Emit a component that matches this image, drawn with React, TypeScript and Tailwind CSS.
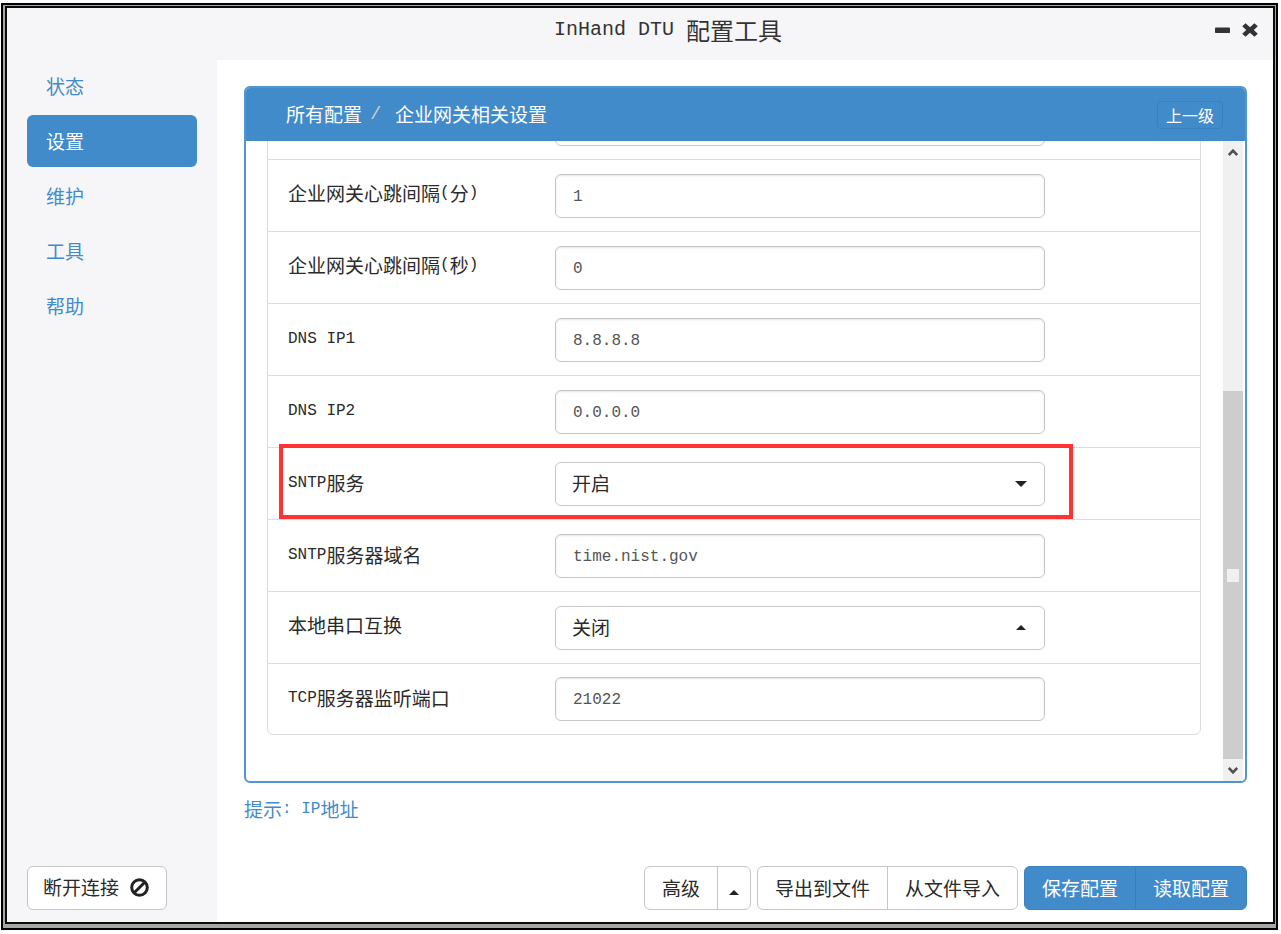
import type { ReactNode } from "react";

/** Splits mixed text so Latin runs are set in a smaller monospace than the Chinese around them. */
function Mixed({ text, large }: { text: string; large?: boolean }) {
  const parts = text.match(/[\x20-\x7e]+|[^\x20-\x7e]+/g) ?? [];
  return (
    <span className="inline-flex items-center whitespace-pre">
      {parts.map((part, i) => (
        <span
          key={i}
          className={
            /^[\x20-\x7e]/.test(part)
              ? large
                ? "font-['Liberation_Mono',monospace] text-[20px]"
                : "font-['Liberation_Mono',monospace] text-[16px]"
              : undefined
          }
        >
          {part}
        </span>
      ))}
    </span>
  );
}

const navItems = ["状态", "设置", "维护", "工具", "帮助"];

type Field = {
  id: string;
  label: string;
  value: string;
  options?: string[];
  open?: boolean;
  marked?: boolean;
};

const fields: Field[] = [
  { id: "heartbeat-min", label: "企业网关心跳间隔(分)", value: "1" },
  { id: "heartbeat-sec", label: "企业网关心跳间隔(秒)", value: "0" },
  { id: "dns1", label: "DNS IP1", value: "8.8.8.8" },
  { id: "dns2", label: "DNS IP2", value: "0.0.0.0" },
  { id: "sntp", label: "SNTP服务", value: "开启", options: ["开启", "关闭"], open: true, marked: true },
  { id: "sntp-host", label: "SNTP服务器域名", value: "time.nist.gov" },
  { id: "serial-swap", label: "本地串口互换", value: "关闭", options: ["开启", "关闭"] },
  { id: "tcp-port", label: "TCP服务器监听端口", value: "21022" },
];

const boxClass =
  "block h-11 w-full rounded-md border border-[#c6c6c6] bg-white outline-none";

function TextBox({ id, value }: { id: string; value: string }) {
  return (
    <input
      id={id}
      aria-label={value === "" ? id : undefined}
      type="text"
      defaultValue={value}
      className={`${boxClass} px-[17px] pt-0.5 font-['Liberation_Mono',monospace] text-[16px] text-[#555] shadow-[inset_0_1px_2px_rgba(0,0,0,0.1)]`}
    />
  );
}

function Row({ field }: { field: Field }) {
  return (
    <div className="relative grid h-[72px] shrink-0 grid-cols-[267px_minmax(0,1fr)_155px] items-center border-b border-[#dcdcdc] pl-5 last:h-[70px] last:border-b-0">
      <label htmlFor={field.id} className="pb-1.5 text-[#2a2a2a]">
        <Mixed text={field.label} />
      </label>
      {field.options ? (
        <div className="relative">
          <select
            id={field.id}
            defaultValue={field.value}
            className={`${boxClass} appearance-none px-4 pb-0.5 text-[19px] text-[#2a2a2a]`}
          >
            {field.options.map((option) => (
              <option key={option}>{option}</option>
            ))}
          </select>
          <span className="pointer-events-none absolute inset-y-0 right-4 flex w-4 items-center justify-center">
            {field.open ? (
              <svg width="12" height="6" viewBox="0 0 12 6" aria-hidden="true">
                <path d="M0 0h12L6 6z" fill="#222" />
              </svg>
            ) : (
              <svg width="10" height="5" viewBox="0 0 10 5" aria-hidden="true">
                <path d="M0 5h10L5 0z" fill="#222" />
              </svg>
            )}
          </span>
        </div>
      ) : (
        <TextBox id={field.id} value={field.value} />
      )}
      {field.marked && (
        <span className="pointer-events-none absolute -top-1 right-[127px] bottom-0 left-[11px] border-4 border-[#ff3333]" />
      )}
    </div>
  );
}

function ScrollBar() {
  return (
    <div className="mr-0.5 flex w-5 shrink-0 flex-col bg-[#f0f0f0]">
      <span className="flex h-[22px] items-center justify-center">
        <svg width="10" height="9" viewBox="0 0 10 9" fill="none" aria-hidden="true">
          <path d="M0.8 7L5 2.6L9.200 7" stroke="#505050" strokeWidth="2.600" />
        </svg>
      </span>
      <span className="flex-[228]" />
      <span className="flex flex-[368] items-center justify-center bg-[#cdcdcd]">
        <span className="h-[13px] w-3 bg-[#f0f0f0]" />
      </span>
      <span className="flex h-[22px] items-center justify-center">
        <svg width="10" height="9" viewBox="0 0 10 9" fill="none" aria-hidden="true">
          <path d="M0.8 2L5 6.400L9.200 2" stroke="#505050" strokeWidth="2.600" />
        </svg>
      </span>
    </div>
  );
}

function Group({ blue, children }: { blue?: boolean; children: ReactNode }) {
  return (
    <div
      className={
        blue
          ? "flex h-11 divide-x divide-[#357ebd] overflow-hidden rounded-md border border-[#3a82c2] bg-[#428bca] text-white"
          : "flex h-11 divide-x divide-[#c6c6c6] overflow-hidden rounded-md border border-[#c6c6c6] bg-white text-[#2a2a2a]"
      }
    >
      {children}
    </div>
  );
}

export default function App() {
  return (
    <div className="h-screen bg-white pt-[3px] pr-[3px] pb-1 pl-px font-['Noto_Sans_CJK_SC',sans-serif] text-[19px] leading-7">
      <div className="h-full border-2 border-black bg-[#a6a8a4] pt-px pr-px pb-1 pl-0.5">
        <div className="flex h-full flex-col border-2 border-[#0c0c0c] bg-[#f6f6f9]">
          <header className="flex h-[52px] shrink-0 items-center pb-2">
            <h1 className="flex-1 pb-1.5 pl-[120px] text-center text-[24px] text-[#333]">
              <Mixed text="InHand DTU 配置工具" large />
            </h1>
            <div className="flex w-16 items-center justify-end gap-3 pr-[15px]">
              <button type="button" aria-label="最小化">
                <svg width="15" height="16" viewBox="0 0 15 16" className="block" aria-hidden="true">
                  <rect y="5.500" width="15" height="5.500" rx="0.800" fill="#333" />
                </svg>
              </button>
              <button type="button" aria-label="关闭">
                <svg width="16" height="16" viewBox="0 0 16 16" className="block" aria-hidden="true">
                  <path
                    d="M3.600 1.200L8 5.200L12.400 1.200L15.800 4.300L11.800 8L15.800 11.700L12.400 14.800L8 10.800L3.600 14.800L0.200 11.700L4.200 8L0.200 4.300z"
                    fill="#333"
                  />
                </svg>
              </button>
            </div>
          </header>

          <div className="flex min-h-0 flex-1">
            <aside className="flex w-[210px] shrink-0 flex-col justify-between px-5 pb-3">
              <nav className="flex flex-col gap-[3px]">
                {navItems.map((item) => (
                  <a
                    key={item}
                    href="#"
                    className={
                      item === "设置"
                        ? "flex h-[52px] items-center rounded-md bg-[#428bca] pb-px pl-[19px] text-white"
                        : "flex h-[52px] items-center rounded-md pb-px pl-[19px] text-[#428bca]"
                    }
                  >
                    {item}
                  </a>
                ))}
              </nav>
              <button
                type="button"
                className="flex h-11 w-[140px] items-center gap-[11px] rounded-md border border-[#c6c6c6] bg-white pb-0.5 pl-[15px] text-[#2a2a2a]"
              >
                断开连接
                <svg width="19" height="19" viewBox="0 0 19 19" fill="none" stroke="#222" strokeWidth="3" aria-hidden="true">
                  <circle cx="9.500" cy="9.500" r="7.800" />
                  <path d="M4.200 14.800L14.800 4.200" />
                </svg>
              </button>
            </aside>

            <main className="flex min-w-0 flex-1 flex-col bg-white pt-[26px] pr-[26px] pb-3 pl-[27px]">
              <section className="flex min-h-0 flex-1 flex-col overflow-hidden rounded-md border-2 border-[#5196d2]">
                <div className="-mx-0.5 -mt-0.5 flex h-[55px] shrink-0 items-center bg-[#428bca] pr-6 pl-[42px] text-white">
                  <a href="#">所有配置</a>
                  <span className="w-[33px] pl-2 font-['Liberation_Mono',monospace] text-[#ccc]">/</span>
                  <a href="#">企业网关相关设置</a>
                  <button
                    type="button"
                    className="mt-0.5 ml-auto h-7 rounded border border-[#3880bf] px-2 text-[16px] leading-6"
                  >
                    上一级
                  </button>
                </div>
                <div className="flex min-h-0 flex-1">
                  <div className="flex min-w-0 flex-1 flex-col justify-end overflow-hidden pr-[22px] pb-[46px] pl-[21px]">
                    <div className="flex shrink-0 flex-col rounded-md border border-[#dcdcdc]">
                      <Row field={{ id: "gateway-port", label: "", value: "" }} />
                      {fields.map((field) => (
                        <Row key={field.id} field={field} />
                      ))}
                    </div>
                  </div>
                  <ScrollBar />
                </div>
              </section>

              <p className="mt-3 h-7 text-[#428bca]">
                <Mixed text="提示: IP地址" />
              </p>

              <footer className="mt-[43px] flex justify-end gap-1.5">
                <Group>
                  <button type="button" className="px-[17px]">
                    高级
                  </button>
                  <button type="button" aria-label="更多" className="flex w-8 items-center justify-center pt-2">
                    <svg width="10" height="5" viewBox="0 0 10 5" aria-hidden="true">
                      <path d="M0 5h10L5 0z" fill="#222" />
                    </svg>
                  </button>
                </Group>
                <Group>
                  <button type="button" className="px-[17px]">
                    导出到文件
                  </button>
                  <button type="button" className="px-[17px]">
                    从文件导入
                  </button>
                </Group>
                <Group blue>
                  <button type="button" className="px-[17px]">
                    保存配置
                  </button>
                  <button type="button" className="px-[17px]">
                    读取配置
                  </button>
                </Group>
              </footer>
            </main>
          </div>
        </div>
      </div>
    </div>
  );
}
